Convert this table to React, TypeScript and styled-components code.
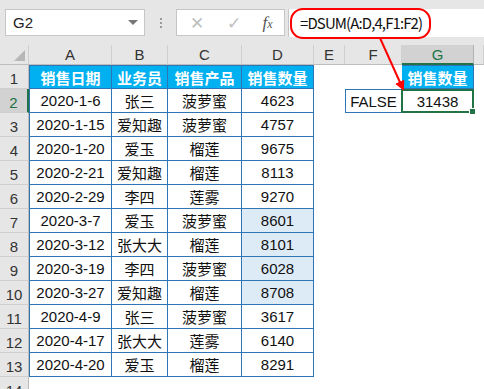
import {FC} from "react";
import styled, {createGlobalStyle} from "styled-components";

const GlobalStyle = createGlobalStyle`
  html, body {
    margin: 0;
    padding: 0;
    background: #ffffff;
    overflow: hidden;
  }
  body {
    font-family: "Liberation Sans", "Noto Sans CJK SC", sans-serif;
  }
`

const COLS = ['A', 'B', 'C', 'D', 'E', 'F', 'G']
const HEADERS = ['销售日期', '业务员', '销售产品', '销售数量']

const rows: [string, string, string, string][] = [
  ['2020-1-6', '张三', '菠萝蜜', '4623'],
  ['2020-1-15', '爱知趣', '菠萝蜜', '4757'],
  ['2020-1-20', '爱玉', '榴莲', '9675'],
  ['2020-2-21', '爱知趣', '榴莲', '8113'],
  ['2020-2-29', '李四', '莲雾', '9270'],
  ['2020-3-7', '爱玉', '菠萝蜜', '8601'],
  ['2020-3-12', '张大大', '榴莲', '8101'],
  ['2020-3-19', '李四', '菠萝蜜', '6028'],
  ['2020-3-27', '爱知趣', '榴莲', '8708'],
  ['2020-4-9', '张三', '菠萝蜜', '3617'],
  ['2020-4-17', '张大大', '莲雾', '6140'],
  ['2020-4-20', '爱玉', '榴莲', '8291'],
]

// rows 7-10 have a light blue fill in column D
const shaded = (r: number) => r >= 7 && r <= 10

const App: FC = () => {
  return <Page>
    <GlobalStyle/>
    <FormulaBar>
      <NameBox>
        <span>G2</span>
        <Caret/>
      </NameBox>
      <Grip>
        <i/><i/><i/>
      </Grip>
      <ButtonBox>
        <BarIcon>✕</BarIcon>
        <BarIcon>✓</BarIcon>
        <Fx>f<small>x</small></Fx>
      </ButtonBox>
      <FormulaInput>
        <Circled>=DSUM(A:D,4,F1:F2)</Circled>
      </FormulaInput>
    </FormulaBar>

    <Sheet>
      <Corner/>
      {COLS.map(c => <ColHead key={c} $active={c === 'G'}>{c}</ColHead>)}
      <ColHead/>

      <RowHead>1</RowHead>
      {HEADERS.map((h, i) => <Cell key={h} $box $head $first={i === 0} $top>{h}</Cell>)}
      <Cell/>
      <Cell/>
      <Cell $box $head $top>销售数量</Cell>
      <Cell/>

      {rows.map((r, i) => {
        const n = i + 2
        return [
          <RowHead key={`h${n}`} $active={n === 2}>{n}</RowHead>,
          <Cell key={`a${n}`} $box $first>{r[0]}</Cell>,
          <Cell key={`b${n}`} $box>{r[1]}</Cell>,
          <Cell key={`c${n}`} $box>{r[2]}</Cell>,
          <Cell key={`d${n}`} $box $shade={shaded(n)}>{r[3]}</Cell>,
          <Cell key={`e${n}`}/>,
          n === 2 ? <Cell key={`f${n}`} $box $first $top>FALSE</Cell> : <Cell key={`f${n}`}/>,
          n === 2 ? <Selected key={`g${n}`}>31438</Selected> : <Cell key={`g${n}`}/>,
          <Cell key={`x${n}`}/>,
        ]
      })}

      <RowHead>14</RowHead>
    </Sheet>

    <Arrow viewBox="0 0 484 389">
      <defs>
        <marker id="head" markerWidth="10" markerHeight="10" refX="8" refY="5" orient="auto"
                markerUnits="userSpaceOnUse">
          <path d="M0,0 L10,5 L0,10 Z" fill="#ff0000"/>
        </marker>
      </defs>
      <line x1="380" y1="38" x2="403" y2="89" stroke="#ff0000" strokeWidth="2" markerEnd="url(#head)"/>
    </Arrow>
  </Page>
}

const Page = styled.div`
  position: relative;
  width: 484px;
  height: 389px;
  overflow: hidden;
  background: #ffffff;
`

const FormulaBar = styled.div`
  height: 45px;
  background: #e6e6e6;
  display: flex;
  align-items: flex-start;
  padding-top: 9px;
  box-sizing: border-box;
`

const NameBox = styled.div`
  margin-left: 5px;
  width: 140px;
  height: 27px;
  box-sizing: border-box;
  background: #ffffff;
  border: 1px solid #c6c6c6;
  display: flex;
  align-items: center;
  justify-content: space-between;
  padding: 0 6px 0 7px;
  font-size: 15px;
  color: #222;
`

const Caret = styled.span`
  width: 0;
  height: 0;
  border-left: 5px solid transparent;
  border-right: 5px solid transparent;
  border-top: 5px solid #777;
`

const Grip = styled.div`
  width: 31px;
  height: 27px;
  display: flex;
  flex-direction: column;
  align-items: center;
  justify-content: center;
  gap: 2px;

  i {
    width: 2px;
    height: 2px;
    background: #9a9a9a;
  }
`

const ButtonBox = styled.div`
  width: 109px;
  height: 27px;
  box-sizing: border-box;
  background: #ffffff;
  border: 1px solid #c6c6c6;
  display: grid;
  grid-template-columns: 40px 34px 1fr;
  align-items: center;
  justify-items: center;
`

const BarIcon = styled.span`
  font-size: 17px;
  color: #c0c0c0;
  font-family: "DejaVu Sans", sans-serif;
`

const Fx = styled.span`
  font-family: "Liberation Serif", serif;
  font-style: italic;
  font-size: 17px;
  color: #555;

  small {
    font-size: 12px;
  }
`

const FormulaInput = styled.div`
  flex: 1;
  height: 28px;
  margin-left: 3px;
  background: #ffffff;
  border-left: 1px solid #c6c6c6;
  display: flex;
  align-items: center;
`

const Circled = styled.span`
  margin-left: 1px;
  margin-top: 1px;
  padding: 3px 7px 4px 8px;
  border: 2px solid #ff0000;
  border-radius: 13px;
  font-family: "Noto Sans CJK SC", sans-serif;
  font-size: 15px;
  letter-spacing: -0.9px;
  line-height: 20px;
  color: #111;
`

const Sheet = styled.div`
  display: grid;
  grid-template-columns: 29px 83px 56px 74px 72px 31px 57px 72px 1fr;
  grid-template-rows: 20px;
  grid-auto-rows: 24px;
  font-size: 15px;
`

const Corner = styled.div`
  background: #e6e6e6;
  border-right: 1px solid #cfcfcf;
  border-bottom: 1px solid #bdbdbd;
  position: relative;

  &::after {
    content: "";
    position: absolute;
    right: 3px;
    bottom: 3px;
    border-left: 11px solid transparent;
    border-bottom: 11px solid #b7b7b7;
  }
`

const ColHead = styled.div<{ $active?: boolean }>`
  background: ${p => p.$active ? '#d2d2d2' : '#e6e6e6'};
  color: ${p => p.$active ? '#217346' : '#333'};
  border-right: 1px solid ${p => p.$active ? '#b2b2b2' : '#cfcfcf'};
  border-bottom: ${p => p.$active ? '2px solid #217346' : '1px solid #bdbdbd'};
  box-sizing: border-box;
  display: flex;
  align-items: center;
  justify-content: center;
  font-size: 15px;
`

const RowHead = styled.div<{ $active?: boolean }>`
  background: ${p => p.$active ? '#d2d2d2' : '#e6e6e6'};
  color: ${p => p.$active ? '#217346' : '#333'};
  border-right: ${p => p.$active ? '2px solid #217346' : '1px solid #bdbdbd'};
  border-bottom: 1px solid #cfcfcf;
  box-sizing: border-box;
  display: flex;
  align-items: flex-end;
  justify-content: center;
  padding-bottom: 1px;
  font-size: 15px;
`

const Cell = styled.div<{ $box?: boolean, $head?: boolean, $first?: boolean, $top?: boolean, $shade?: boolean }>`
  box-sizing: border-box;
  display: flex;
  align-items: center;
  justify-content: center;
  white-space: nowrap;
  color: #111;
  background: ${p => p.$head ? '#00b0f0' : p.$shade ? '#ddebf7' : '#ffffff'};
  ${p => p.$head && 'color: #ffffff; font-weight: bold;'}
  ${p => p.$box && 'border-right: 1px solid #2f75b5; border-bottom: 1px solid #2f75b5;'}
  ${p => p.$box && p.$first && 'border-left: 1px solid #2f75b5;'}
  ${p => p.$box && p.$top && 'border-top: 1px solid #2f75b5;'}
`

const Selected = styled.div`
  position: relative;
  box-sizing: border-box;
  display: flex;
  align-items: center;
  justify-content: center;
  color: #111;
  border: 2px solid #217346;
  margin-left: -1px;

  &::after {
    content: "";
    position: absolute;
    right: -4px;
    bottom: -4px;
    width: 5px;
    height: 5px;
    background: #217346;
    border: 1px solid #ffffff;
  }
`

const Arrow = styled.svg`
  position: absolute;
  left: 0;
  top: 0;
  width: 484px;
  height: 389px;
  pointer-events: none;
`

export default App;
